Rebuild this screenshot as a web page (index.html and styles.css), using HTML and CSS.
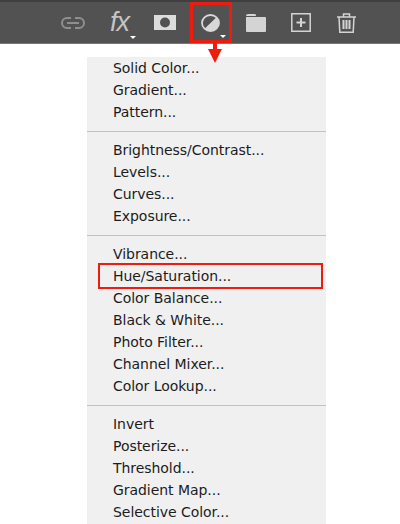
FILE: index.html
```html
<!DOCTYPE html>
<html lang="en">
<head>
<meta charset="utf-8">
<title>Adjustment layer menu</title>
<link rel="stylesheet" href="styles.css">
</head>
<body>
<div class="page">
  <header class="toolbar">
    <svg class="icon link" viewBox="0 0 24 12" width="24" height="12"><g fill="none" stroke="#8f8f8f" stroke-width="2"><path d="M10 1H6a5 5 0 0 0 0 10h4"/><path d="M14 1h4a5 5 0 0 1 0 10h-4"/><path d="M6 6h12"/></g></svg>
    <span class="fx">fx<i class="caret"></i></span>
    <svg class="icon mask" viewBox="0 0 22 15" width="22" height="15"><path fill="#dcdcdc" fill-rule="evenodd" d="M0 0h22v15H0zM11 2.500a5 5 0 1 0 0 10 5 5 0 0 0 0-10z"/></svg>
    <span class="adjust">
      <svg viewBox="0 0 19 18" width="19" height="18"><ellipse cx="9.500" cy="9" rx="8.500" ry="8" fill="none" stroke="#d8d8d8" stroke-width="1.800"/><path fill="#d8d8d8" d="M15.500 3.300A8.400 8 0 0 1 3.500 14.700z"/></svg>
      <i class="caret"></i>
    </span>
    <svg class="icon folder" viewBox="0 0 20 18" width="20" height="18"><path fill="#d4d4d4" d="M0 2Q0 0 2 0h7q1 0 1 2zM0 3h19q1 0 1 1v13q0 1-1 1H1q-1 0-1-1z"/></svg>
    <svg class="icon add" viewBox="0 0 20 19" width="20" height="19"><path fill="none" stroke="#d4d4d4" stroke-width="1.500" d="M.8.8h18.400v17.400H.8z"/><path fill="none" stroke="#d4d4d4" stroke-width="2" d="M5.500 9.500h9M10 5v9"/></svg>
    <svg class="icon trash" viewBox="0 0 19 20" width="19" height="20"><g fill="none" stroke="#d4d4d4"><path stroke-width="1.500" d="M0 4h19M6.500 4V1h6v3M2 4l.8 15.200h13.400L17 4"/><path stroke-width="2" d="M6.500 7v9M9.500 7v9M12.500 7v9"/></g></svg>
  </header>
  <div class="arrow"></div>
  <nav class="menu">
    <div class="row">Solid Color...</div>
    <div class="row">Gradient...</div>
    <div class="row">Pattern...</div>
    <hr class="sep">
    <div class="row">Brightness/Contrast...</div>
    <div class="row">Levels...</div>
    <div class="row">Curves...</div>
    <div class="row">Exposure...</div>
    <hr class="sep">
    <div class="row">Vibrance...</div>
    <div class="row marked">Hue/Saturation...</div>
    <div class="row">Color Balance...</div>
    <div class="row">Black &amp; White...</div>
    <div class="row">Photo Filter...</div>
    <div class="row">Channel Mixer...</div>
    <div class="row">Color Lookup...</div>
    <hr class="sep">
    <div class="row">Invert</div>
    <div class="row">Posterize...</div>
    <div class="row">Threshold...</div>
    <div class="row">Gradient Map...</div>
    <div class="row">Selective Color...</div>
  </nav>
</div>
</body>
</html>
```

FILE: styles.css
```css
*, *::before, *::after { box-sizing: border-box; }
html, body { margin: 0; height: 100%; background: #fff; overflow: hidden; }
.page { position: relative; width: 400px; height: 524px; font-family: "DejaVu Sans", "Noto Sans", sans-serif; }
.toolbar {
  height: 44px;
  display: flex;
  align-items: center;
  background: #525252;
  border-top: 2px solid #3f3f3f;
  border-bottom: 1px solid #777;
  position: relative;
}
.icon { flex: none; display: block; }
.link { margin-left: 61px; }
.fx {
  position: relative;
  margin-left: 25px;
  width: 20px;
  font: italic 27px/1 "Liberation Sans", sans-serif;
  color: #c4c4c4;
  letter-spacing: -1px;
}
.mask { margin-left: 24px; }
.adjust { position: relative; margin-left: 25px; width: 19px; height: 18px; }
.adjust svg { display: block; }
.adjust::after {
  content: "";
  position: absolute;
  left: -11px; top: -12px;
  width: 42px; height: 41px;
  border: 3px solid #ee1c0e;
}
.caret {
  position: absolute;
  width: 0; height: 0;
  border-left: 3px solid transparent;
  border-right: 3px solid transparent;
  border-top: 3px solid #fff;
}
.fx .caret { right: -6px; bottom: -3px; }
.adjust .caret { right: -6px; bottom: -6px; }
.folder { margin-left: 26px; }
.add { margin-left: 25px; }
.trash { margin-left: 26px; }
.arrow { position: absolute; left: 213px; top: 43px; width: 4px; height: 7px; background: #ee1c0e; z-index: 2; }
.arrow::after {
  content: "";
  position: absolute;
  left: -5px; top: 6px;
  border-left: 7px solid transparent;
  border-right: 7px solid transparent;
  border-top: 14px solid #ee1c0e;
}
.menu { position: absolute; left: 87px; top: 57px; width: 239px; height: 467px; background: #f0f0f0; }
.row { height: 22px; padding-left: 26px; font-size: 14px; letter-spacing: -0.050px; line-height: 23px; color: #1c1c1c; white-space: nowrap; position: relative; }
.sep { height: 1px; margin: 8px 0 7px; border: 0; background: #c2c2c2; }
.marked::after {
  content: "";
  position: absolute;
  left: 11px; top: -2px;
  width: 225px; height: 26px;
  border: 2px solid #ee1c0e;
}
```
